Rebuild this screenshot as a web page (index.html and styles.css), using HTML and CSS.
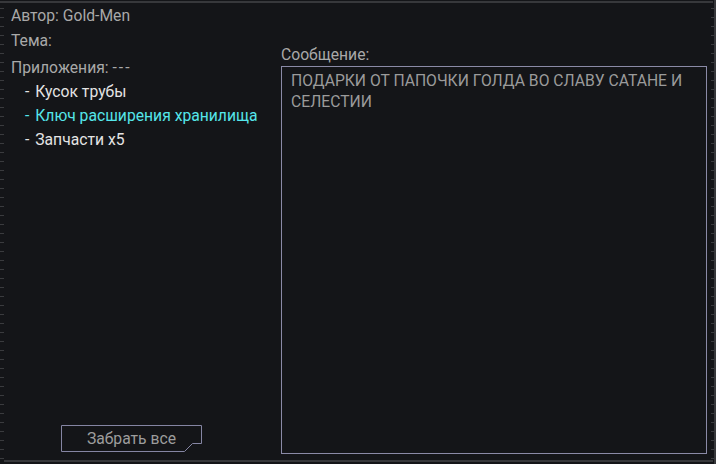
FILE: index.html
```html
<!DOCTYPE html>
<html lang="ru">
<head>
  <meta charset="UTF-8">
  <title>Письмо</title>
  <link rel="stylesheet" href="styles.css">
</head>
<body>
  <div class="frame">
    <div class="left">
      <div class="meta">Автор: Gold-Men</div>
      <div class="meta">Тема:</div>
      <div class="meta attach-title">Приложения: <span class="dashes">---</span></div>
      <ul class="attach">
        <li><span class="dash">-</span> Кусок трубы</li>
        <li class="rare"><span class="dash">-</span> Ключ расширения хранилища</li>
        <li><span class="dash">-</span> Запчасти x5</li>
      </ul>
      <button class="take-btn">
        <svg class="take-shape" width="142" height="28" viewBox="0 0 142 28">
          <polygon points="0.5,0.5 140.5,0.5 140.5,18.5 131.5,18.5 123.5,26.5 0.5,26.5" fill="#141518" stroke="#8585a3" stroke-width="1"/>
        </svg>
        <span>Забрать все</span>
      </button>
    </div>
    <div class="right">
      <div class="msg-label">Сообщение:</div>
      <div class="msg-box">ПОДАРКИ ОТ ПАПОЧКИ ГОЛДА ВО СЛАВУ САТАНЕ И СЕЛЕСТИИ</div>
    </div>
  </div>
</body>
</html>
```
FILE: styles.css
```css
body {
  margin: 0;
  background: #141518;
  font-family: Roboto, "Liberation Sans", sans-serif;
  font-size: 15.7px;
  color: #a9a9a9;
}
.frame {
  position: relative;
  width: 716px;
  height: 464px;
  box-sizing: border-box;
  display: flex;
  background:
    linear-gradient(#37383b, #37383b) 0 1px / 713px 2px no-repeat,
    linear-gradient(#37383b, #37383b) 4px 460px / 709px 2px no-repeat,
    linear-gradient(#37383b, #37383b) 714px 0 / 2px 464px no-repeat,
    repeating-linear-gradient(to bottom, transparent 0 8px, #3a3b3e 8px 9px) 0 0 / 4px 464px no-repeat,
    repeating-linear-gradient(to bottom, transparent 0 8px, #3a3b3e 8px 9px) 711px 0 / 3px 464px no-repeat,
    #141518;
}
.left {
  width: 270px;
  padding: 3px 0 12px 11px;
  box-sizing: border-box;
  display: flex;
  flex-direction: column;
}
.meta {
  line-height: 25px;
}
.attach-title {
  margin-top: 2px;
}
.dashes {
  letter-spacing: 2px;
}
.attach {
  list-style: none;
  margin: 0;
  padding: 0 0 0 14px;
  line-height: 24px;
  color: #e4e4e4;
}
.attach .dash {
  margin-right: 2px;
}
.attach .rare {
  color: #55e6ea;
}
.take-btn {
  position: relative;
  margin-top: auto;
  margin-left: 50px;
  width: 142px;
  height: 27px;
  padding: 0;
  border: none;
  background: none;
  font: inherit;
  color: #9d9d9d;
  cursor: pointer;
}
.take-shape {
  position: absolute;
  left: 0;
  top: 0;
}
.take-btn span {
  position: relative;
  margin-left: -1px;
}
.right {
  flex: 1;
  padding: 46px 9px 10px 11px;
  display: flex;
  flex-direction: column;
}
.msg-label {
  line-height: 18px;
}
.msg-box {
  flex: 1;
  margin-top: 2px;
  border: 1px solid #8a8aa6;
  padding: 3px 9px;
  line-height: 21px;
  color: #9b9b9b;
}
```
